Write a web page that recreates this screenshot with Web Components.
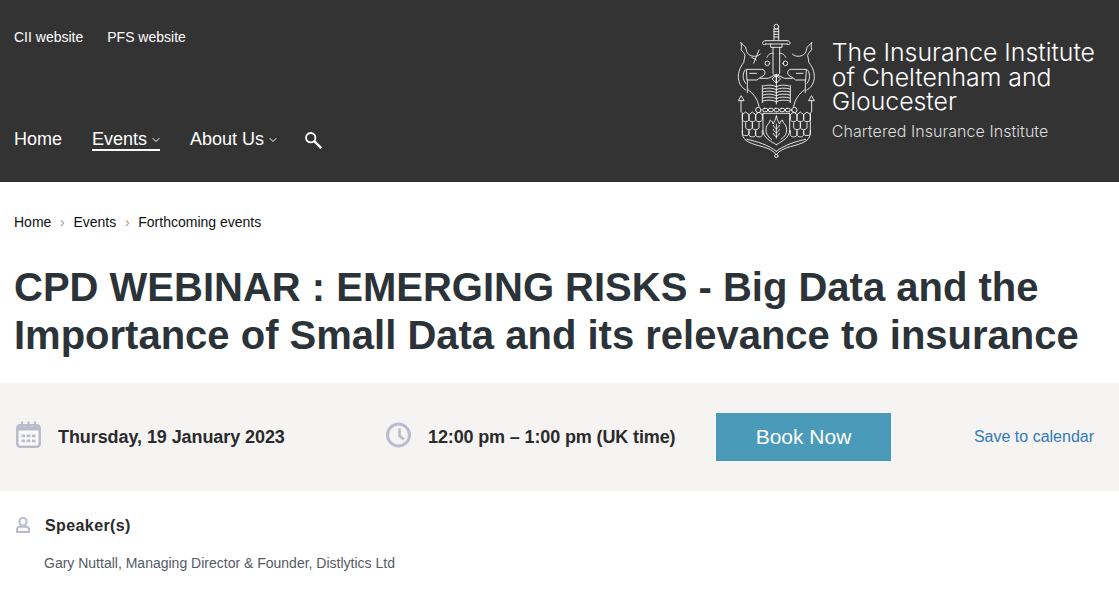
<!DOCTYPE html>
<html lang="en">
<head>
<meta charset="utf-8">
<title>CPD Webinar</title>
<style>
  html, body { margin: 0; padding: 0; background: #fff; }
  body { font-family: "Liberation Sans", Arial, sans-serif; overflow: hidden; }
</style>
</head>
<body>
<site-header></site-header>
<bread-crumbs>
  <a href="#">Home</a>
  <a href="#">Events</a>
  <a href="#">Forthcoming events</a>
</bread-crumbs>
<page-title>CPD WEBINAR : EMERGING RISKS - Big Data and the Importance of Small Data and its relevance to insurance</page-title>
<event-bar></event-bar>
<speaker-block>Gary Nuttall, Managing Director &amp; Founder, Distlytics Ltd</speaker-block>

<script>
const CHEVRON = `<svg class="chev" width="8" height="6" viewBox="0 0 8 6" aria-hidden="true"><path d="M.7 1.2L4 4.5l3.3-3.3" fill="none" stroke="currentColor" stroke-width="1"/></svg>`;

const scale = (x, y, w, h) => `M${x} ${y}v${h}c0 9 ${w} 9 ${w} 0v-${h}`;

const SCALES = [
  scale(22, 284, 20, 14), scale(42, 284, 20, 14), scale(62, 284, 20, 14),
  scale(32, 308, 20, 14), scale(52, 308, 20, 14),
  scale(22, 332, 20, 8), scale(42, 332, 20, 12), scale(62, 332, 20, 12),
].join('');

// left half of the crest, mirrored round x=124 for the right half.
// traced on a 3x grid, so the viewBox is 3 times the drawn size
const CREST_HALF = `
  <path d="M18 68l14 14c2 8 2 16 10 22c10 6 24 8 34-2M96 112c4-10 10-12 18-12"/>
  <path d="M18 68c2 8 2 14 0 20c4 8 10 10 12 18l-4 22c-12 14-20 36-14 56c3 12 12 22 20 26"/>
  <path d="M30 150c-8 12-8 28 2 40"/>
  <circle cx="97" cy="130" r="7"/>
  <path d="M35 148h45c6 0 10 4 10 10c0 8-8 12-14 14l-10 8H37zM37 180v38M44 160h20"/>
  <path d="M76 175h24l24-12"/>
  <path d="M112 176l12-10v22z"/>
  <path d="M124 200c-12-6-26-6-38-2M124 209c-12-6-26-6-40-2M124 218c-12-6-26-6-40-2M124 227c-12-6-26-6-40-2M124 236c-12-6-26-6-40-2M124 245c-12-6-26-6-40-2"/>
  <path d="M82 196v52M40 210c14 10 28 26 32 50"/>
  <path d="M18 228l-8 14h16zM18 242v34"/>
  <circle cx="70" cy="270" r="8"/>
  <path d="M22 284l10-8l10 8l10-8l10 8l10-8l10 8"/>
  <path d="M22 278v62c0 24 30 32 60 40c18 5 34 12 42 24"/>
  <path d="M36 358c30 6 66 18 88 36"/>
  <path d="M84 280h40M84 280v50c0 24 24 34 40 44"/>
  <path d="${SCALES}"/>
  <path d="M110 358c-12-8-20-20-16-36c2-10 10-12 12-22c6 4 8 8 8 12c4-6 8-14 10-24"/>
  <path d="M124 350c-5-2-9-6-9-10M124 338c-5-2-9-6-9-10M124 326c-5-2-9-6-9-10"/>`;

const CREST = `<svg class="crest" width="85" height="140" viewBox="0 0 255 420" fill="none" stroke="#fff" stroke-width="2.6" stroke-linejoin="round" stroke-linecap="round" aria-hidden="true">
  <circle cx="124" cy="20" r="7"/>
  <path d="M117 27h14M117 27v33M131 27v33M117 35h14M117 43h14M117 51h14"/>
  <path d="M92 72h64M92 62h64M92 62c-6 0-10 4-9 8c1 4 5 6 9 2M156 62c6 0 10 4 9 8c-1 4-5 6-9 2"/>
  <path d="M107 72v10h34V72M114 82v78l10 12l10-12V82"/>
  <path d="M72 90L56 130M50 112l14 8"/>
  <path d="M124 180v72M124 312v42"/>
  <rect x="83" y="265" width="15" height="10" rx="5"/><rect x="100" y="265" width="15" height="10" rx="5"/><rect x="117" y="265" width="15" height="10" rx="5"/><rect x="134" y="265" width="15" height="10" rx="5"/><rect x="151" y="265" width="15" height="10" rx="5"/>
  <circle cx="124" cy="408" r="5"/>
  <g>${CREST_HALF}</g>
  <g transform="translate(248,0) scale(-1,1)">${CREST_HALF}</g>
</svg>`;

customElements.define('site-header', class extends HTMLElement {
  constructor() {
    super();
    this.attachShadow({mode: 'open'}).innerHTML = `
      <style>
        :host { display: flex; justify-content: space-between; height: 182px; background: #333; color: #fff; }
        a { color: inherit; text-decoration: none; }
        .left { display: flex; flex-direction: column; padding-left: 14px; }
        .top { display: flex; gap: 24px; padding-top: 29px; font-size: 14px; line-height: 16px; }
        nav { display: flex; align-items: flex-start; margin-top: 84px; font-size: 18px; line-height: 20px; }
        nav a { display: flex; align-items: center; height: 20px; border-bottom: 2px solid transparent; }
        nav a.on { border-bottom-color: #fff; }
        nav a + a { margin-left: 30px; }
        .chev { margin-left: 5px; margin-top: 1px; }
        .search { margin-left: 28px; padding-top: 3px; line-height: 0; }
        .brand { display: flex; padding: 20px 24px 0 0; }
        .crest { margin-right: 12px; }
        .name { font-family: Inter, sans-serif; font-weight: 300; font-size: 24.8px; line-height: 24.5px; padding-top: 20px; white-space: nowrap; }
        .sub { font-family: Inter, sans-serif; font-weight: 300; font-size: 16px; line-height: 20px; margin-top: 7.5px; letter-spacing: 0.05px; color: #ddd; white-space: nowrap; }
      </style>
      <div class="left">
        <div class="top"><a href="#">CII website</a><a href="#">PFS website</a></div>
        <nav>
          <a href="#">Home</a>
          <a href="#" class="on">Events${CHEVRON}</a>
          <a href="#">About Us${CHEVRON}</a>
          <span class="search"><svg width="18" height="18" viewBox="0 0 18 18" fill="none" stroke="#fff" aria-hidden="true"><circle cx="5.7" cy="5.7" r="4.7" stroke-width="1.8"/><path d="M9.2 9.2l7 7" stroke-width="2.4"/></svg></span>
        </nav>
      </div>
      <div class="brand">
        ${CREST}
        <div>
          <div class="name">The Insurance Institute<br>of Cheltenham and<br>Gloucester</div>
          <div class="sub">Chartered Insurance Institute</div>
        </div>
      </div>`;
  }
});

customElements.define('bread-crumbs', class extends HTMLElement {
  constructor() {
    super();
    this.attachShadow({mode: 'open'}).innerHTML = `
      <style>
        :host { display: block; padding: 32px 14px 0; font-size: 14px; line-height: 16px; color: #111; }
        ::slotted(a) { color: #111; text-decoration: none; }
        ::slotted(a:not(:last-child))::after { content: "›"; color: #999; margin: 0 8.7px; }
        .row { display: flex; align-items: center; }
      </style>
      <div class="row"><slot></slot></div>`;
  }
});

customElements.define('page-title', class extends HTMLElement {
  constructor() {
    super();
    this.attachShadow({mode: 'open'}).innerHTML = `
      <style>
        :host { display: block; padding: 33px 14px 24px; }
        h1 { margin: 0; font-size: 40px; line-height: 48px; font-weight: 700; color: #2c3338; }
      </style>
      <h1><slot></slot></h1>`;
  }
});

customElements.define('event-bar', class extends HTMLElement {
  constructor() {
    super();
    this.attachShadow({mode: 'open'}).innerHTML = `
      <style>
        :host { display: flex; align-items: center; height: 108px; background: #f5f4f3; color: #2b2b2b; box-sizing: border-box; padding: 0 25px 0 16px; font-size: 18px; font-weight: 700; }
        .item { display: flex; align-items: center; }
        .date { width: 370px; gap: 17px; letter-spacing: -0.08px; }
        .time { gap: 17px; width: 330px; letter-spacing: -0.13px; }
        svg { flex: none; margin-bottom: 5px; }
        .book { display: flex; align-items: center; justify-content: center; width: 175px; height: 48px; background: #4a9aba; color: #fff; font-size: 21px; font-weight: 400; text-decoration: none; }
        .cal { margin-left: auto; color: #337ab7; font-size: 16px; font-weight: 400; text-decoration: none; }
      </style>
      <div class="item date">
        <svg width="25" height="27" viewBox="0 0 25 27" aria-hidden="true"><rect x="1.3" y="4.3" width="22.4" height="21.4" rx="3" fill="#fafafa" stroke="#b9bccd" stroke-width="2.6"/><path d="M1.3 7.5h22.4" stroke="#b9bccd" stroke-width="4"/><path d="M6 .5v6M12.5 .5v6M19 .5v6" stroke="#b9bccd" stroke-width="2.2"/><path d="M5.5 13.5h3.6v2.8H5.500zM10.700 13.500h3.600v2.800h-3.600zM15.900 13.500h3.600v2.800h-3.600zM5.500 18.500h3.600v2.800H5.500zM10.700 18.500h3.600v2.800h-3.600zM15.900 18.500h3.600v2.800h-3.600z" fill="#b9bccd"/></svg>
        <span>Thursday, 19 January 2023</span>
      </div>
      <div class="item time">
        <svg width="25" height="26" viewBox="0 0 25 26" aria-hidden="true"><circle cx="12.500" cy="13" r="11" fill="none" stroke="#b9bccd" stroke-width="3"/><path d="M13.500 6.500V14l4.500 3.500" fill="none" stroke="#b9bccd" stroke-width="2.600"/></svg>
        <span>12:00 pm – 1:00 pm (UK time)</span>
      </div>
      <a class="book" href="#">Book Now</a>
      <a class="cal" href="#">Save to calendar</a>`;
  }
});

customElements.define('speaker-block', class extends HTMLElement {
  constructor() {
    super();
    this.attachShadow({mode: 'open'}).innerHTML = `
      <style>
        :host { display: block; padding: 25px 16px 0; }
        .head { display: flex; align-items: center; gap: 15px; font-size: 16px; line-height: 20px; font-weight: 700; color: #2b2b2b; letter-spacing: 0.4px; }
        .head svg { margin-bottom: 2px; }
        p { margin: 17px 0 0 28px; font-size: 14px; line-height: 20px; color: #555a66; }
      </style>
      <div class="head">
        <svg width="14" height="16" viewBox="0 0 14 16" fill="none" stroke="#b9bccd" stroke-width="2" aria-hidden="true"><rect x="3.500" y="1" width="7" height="7.500" rx="3.200"/><path d="M1 15v-2.200C1 10.800 2.600 9.800 4 9.800h6c1.400 0 3 1 3 3V15z"/></svg>
        <span>Speaker(s)</span>
      </div>
      <p><slot></slot></p>`;
  }
});
</script>
</body>
</html>
